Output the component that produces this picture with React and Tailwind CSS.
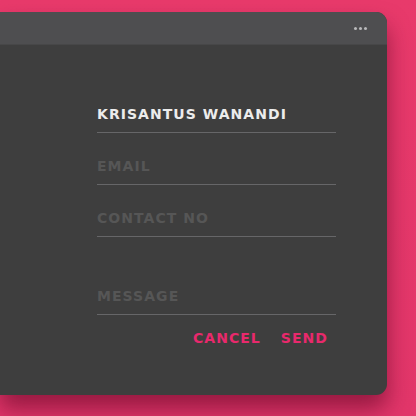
export default function App() {
  const fields = [
    { label: "KRISANTUS WANANDI", filled: true, h: "h-[52px]" },
    { label: "EMAIL", filled: false, h: "h-[52px]" },
    { label: "CONTACT NO", filled: false, h: "h-[52px]" },
    { label: "MESSAGE", filled: false, h: "h-[78px]" },
  ];

  return (
    <div
      className="w-[416px] h-[416px] overflow-hidden bg-gradient-to-b from-[#e83a6b] to-[#e2366a] pt-3"
      style={{ fontFamily: '"DejaVu Sans", "Open Sans", sans-serif' }}
    >
      <div className="w-[387px] h-[383px] rounded-r-[11px] overflow-hidden bg-[#3e3e3e] flex flex-col shadow-[0_14px_22px_rgba(110,10,45,0.65)]">
        {/* Title bar */}
        <div className="h-[33px] bg-[#4e4e50] flex items-center justify-end pr-[20px] border-b border-[#474748]">
          <div className="flex gap-[2px]">
            <span className="w-[3px] h-[3px] rounded-full bg-[#b9b9bb]" />
            <span className="w-[3px] h-[3px] rounded-full bg-[#b9b9bb]" />
            <span className="w-[3px] h-[3px] rounded-full bg-[#b9b9bb]" />
          </div>
        </div>

        {/* Form */}
        <div className="pl-[97px] pt-[36px]">
          <div className="w-[239px] flex flex-col">
            {fields.map((f) => (
              <div
                key={f.label}
                className={`${f.h} flex items-end pb-[8px] border-b border-[#666668]`}
              >
                <span
                  className={`text-[14px] leading-[20px] font-bold tracking-[0.075em] ${
                    f.filled ? "text-[#ececec]" : "text-[#565656]"
                  }`}
                >
                  {f.label}
                </span>
              </div>
            ))}
            <div className="flex justify-end gap-[20px] pr-[8px] mt-[13px]">
              <span className="text-[14px] leading-[20px] font-bold tracking-[0.075em] text-[#e8296c]">
                CANCEL
              </span>
              <span className="text-[14px] leading-[20px] font-bold tracking-[0.075em] text-[#e8296c]">
                SEND
              </span>
            </div>
          </div>
        </div>
      </div>
    </div>
  );
}
